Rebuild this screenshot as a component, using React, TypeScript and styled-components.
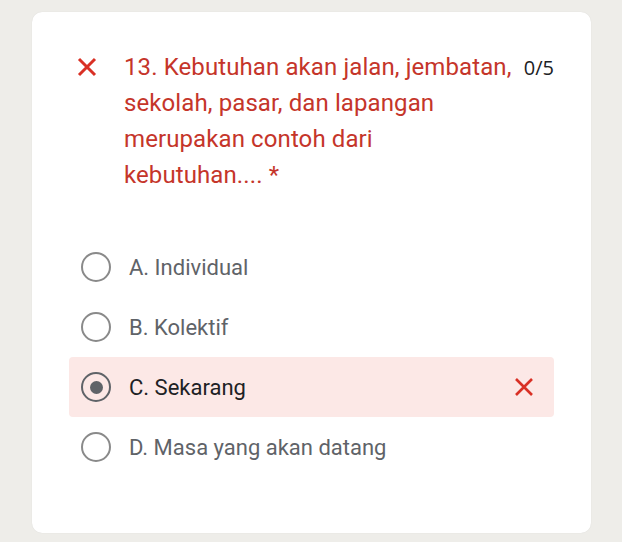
import React from "react";
import styled, { createGlobalStyle } from "styled-components";

const Global = createGlobalStyle`
  html, body { margin: 0; padding: 0; background: #eeede9; }
  body { font-family: Roboto, "Noto Sans", Arial, sans-serif; }
`;

const Page = styled.div`
  width: 622px;
  height: 542px;
  box-sizing: border-box;
  padding: 12px 31px 9px 32px;
  background: #eeede9;
`;

const Card = styled.div`
  background: #ffffff;
  border-radius: 10px;
  height: 521px;
  box-sizing: border-box;
  padding: 37px 37px 0 37px;
  box-shadow: 0 0 1px rgba(0, 0, 0, 0.12);
`;

const Header = styled.div`
  display: flex;
  align-items: flex-start;
  padding-left: 8px;
`;

const HeaderIcon = styled.div`
  width: 20px;
  height: 36px;
  display: flex;
  align-items: center;
  flex-shrink: 0;
  margin-right: 27px;
`;

const Title = styled.div`
  width: 394px;
  font-size: 24px;
  line-height: 36px;
  letter-spacing: 0.1px;
  color: #c5352a;
`;

const Score = styled.div`
  margin-left: auto;
  font-family: "Open Sans", Roboto, sans-serif;
  font-size: 20px;
  line-height: 36px;
  color: #202124;
  margin-top: 1px;
`;

const Options = styled.div`
  display: flex;
  flex-direction: column;
  margin-top: 44px;
`;

const Row = styled.div<{ $wrong?: boolean }>`
  display: flex;
  align-items: center;
  height: 60px;
  padding: 0 20px 0 12px;
  border-radius: 4px;
  background: ${(p) => (p.$wrong ? "#fce8e6" : "transparent")};
`;

const Radio = styled.div<{ $checked?: boolean }>`
  width: 30px;
  height: 30px;
  box-sizing: border-box;
  border-radius: 50%;
  border: 2.5px solid ${(p) => (p.$checked ? "#5f6368" : "#8a8a8a")};
  display: flex;
  align-items: center;
  justify-content: center;
  flex-shrink: 0;
  margin-right: 18px;
  &::after {
    content: "";
    display: ${(p) => (p.$checked ? "block" : "none")};
    width: 13px;
    height: 13px;
    border-radius: 50%;
    background: #5f6368;
  }
`;

const Label = styled.div<{ $checked?: boolean }>`
  flex: 1;
  font-size: 22px;
  color: ${(p) => (p.$checked ? "#202124" : "#5f6368")};
`;

const Cross = ({ size = 20, stroke = 3 }: { size?: number; stroke?: number }) => (
  <svg width={size} height={size} viewBox="0 0 20 20">
    <path
      d="M2 2 L18 18 M18 2 L2 18"
      stroke="#d93025"
      strokeWidth={stroke}
      strokeLinecap="butt"
      fill="none"
    />
  </svg>
);

const options = [
  { label: "A. Individual" },
  { label: "B. Kolektif" },
  { label: "C. Sekarang", checked: true },
  { label: "D. Masa yang akan datang" },
];

export default function App() {
  return (
    <>
      <Global />
      <Page>
        <Card>
          <Header>
            <HeaderIcon>
              <Cross size={20} stroke={3} />
            </HeaderIcon>
            <Title>
              13. Kebutuhan akan jalan, jembatan, sekolah, pasar, dan lapangan merupakan
              contoh dari
              <br />
              kebutuhan.... *
            </Title>
            <Score>0/5</Score>
          </Header>
          <Options>
            {options.map((o) => (
              <Row key={o.label} $wrong={o.checked}>
                <Radio $checked={o.checked} />
                <Label $checked={o.checked}>{o.label}</Label>
                {o.checked && <Cross size={20} stroke={2.6} />}
              </Row>
            ))}
          </Options>
        </Card>
      </Page>
    </>
  );
}
